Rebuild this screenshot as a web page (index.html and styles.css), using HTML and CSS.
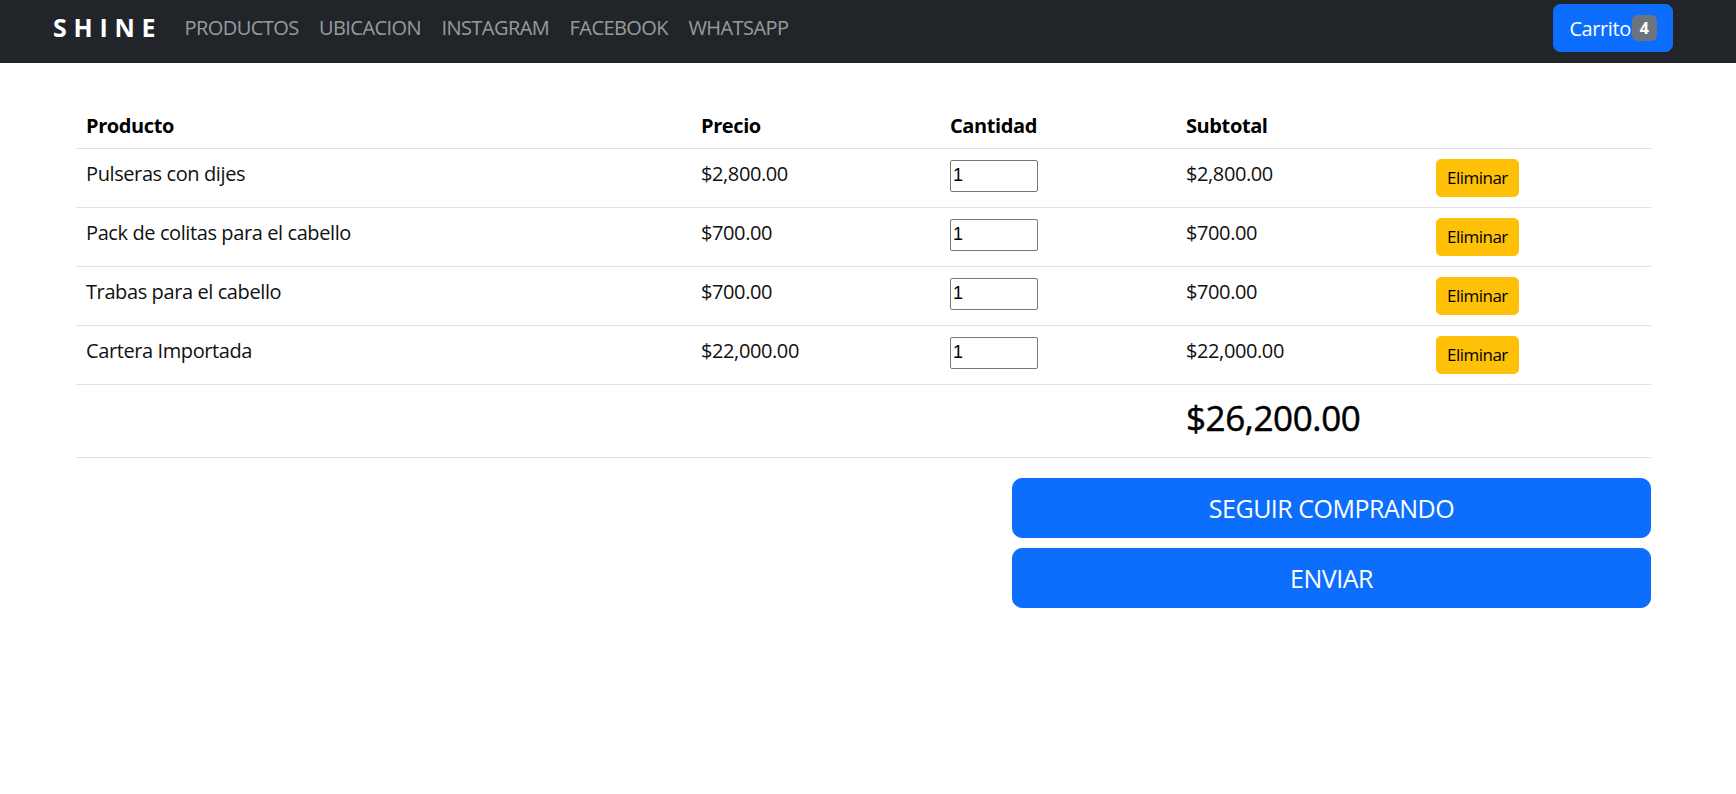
FILE: index.html
```html
<!DOCTYPE html>
<html lang="es">
<head>
<meta charset="utf-8">
<title>SHINE - Carrito</title>
<link rel="stylesheet" href="styles.css">
</head>
<body>
<nav class="navbar">
  <div class="nav-left">
    <a class="brand" href="#">SHINE</a>
    <ul class="nav-links">
      <li><a href="#">PRODUCTOS</a></li>
      <li><a href="#">UBICACION</a></li>
      <li><a href="#">INSTAGRAM</a></li>
      <li><a href="#">FACEBOOK</a></li>
      <li><a href="#">WHATSAPP</a></li>
    </ul>
  </div>
  <button class="btn-cart" type="button">Carrito<span class="badge">4</span></button>
</nav>

<main class="content">
  <table class="cart-table">
    <colgroup>
      <col class="col-prod">
      <col class="col-price">
      <col class="col-qty">
      <col class="col-sub">
      <col class="col-act">
    </colgroup>
    <thead>
      <tr>
        <th>Producto</th>
        <th>Precio</th>
        <th>Cantidad</th>
        <th>Subtotal</th>
        <th></th>
      </tr>
    </thead>
    <tbody>
      <tr>
        <td>Pulseras con dijes</td>
        <td>$2,800.00</td>
        <td><input class="qty" type="number" value="1"></td>
        <td>$2,800.00</td>
        <td><button class="btn-del" type="button">Eliminar</button></td>
      </tr>
      <tr>
        <td>Pack de colitas para el cabello</td>
        <td>$700.00</td>
        <td><input class="qty" type="number" value="1"></td>
        <td>$700.00</td>
        <td><button class="btn-del" type="button">Eliminar</button></td>
      </tr>
      <tr>
        <td>Trabas para el cabello</td>
        <td>$700.00</td>
        <td><input class="qty" type="number" value="1"></td>
        <td>$700.00</td>
        <td><button class="btn-del" type="button">Eliminar</button></td>
      </tr>
      <tr>
        <td>Cartera Importada</td>
        <td>$22,000.00</td>
        <td><input class="qty" type="number" value="1"></td>
        <td>$22,000.00</td>
        <td><button class="btn-del" type="button">Eliminar</button></td>
      </tr>
      <tr class="total-row">
        <td></td>
        <td></td>
        <td></td>
        <td><h3 class="total">$26,200.00</h3></td>
        <td></td>
      </tr>
    </tbody>
  </table>

  <div class="actions">
    <button class="btn-big" type="button">SEGUIR COMPRANDO</button>
    <button class="btn-big" type="button">ENVIAR</button>
  </div>
</main>
</body>
</html>
```

FILE: styles.css
```css
* { box-sizing: border-box; }

body {
  margin: 0;
  font-family: "Open Sans", "Noto Sans", sans-serif;
  font-size: 20px;
  line-height: 1.5;
  color: #111;
  background: #fff;
  letter-spacing: -0.02em;
}

.navbar {
  height: 63px;
  background: #212529;
  display: flex;
  align-items: center;
  justify-content: space-between;
  padding: 0 63px 7px 53px;
}

.nav-left {
  display: flex;
  align-items: center;
}

.brand {
  color: #fff;
  text-decoration: none;
  font-weight: 700;
  font-size: 25px;
  letter-spacing: 0.27em;
  margin-right: 12px;
}

.nav-links {
  list-style: none;
  margin: 0;
  padding: 0;
  display: flex;
}

.nav-links a {
  display: block;
  padding: 0 10.2px;
  color: rgba(255, 255, 255, 0.55);
  text-decoration: none;
  font-size: 20px;
  letter-spacing: -0.028em;
}

.btn-cart {
  height: 48px;
  padding: 0 15px;
  background: #0d6efd;
  border: 1px solid #0d6efd;
  border-radius: 7.5px;
  color: #fff;
  font-family: inherit;
  font-size: 20px;
  letter-spacing: -0.02em;
  display: flex;
  align-items: center;
}

.badge {
  display: inline-block;
  background: #6c757d;
  color: #fff;
  font-weight: 700;
  font-size: 16px;
  line-height: 1;
  padding: 5px 8px;
  border-radius: 6px;
  margin-left: 1px;
  letter-spacing: 0;
}

.content {
  margin: 34px 85px 0 76px;
}

.cart-table {
  width: 100%;
  table-layout: fixed;
  border-collapse: collapse;
  margin-bottom: 20px;
}

.col-prod { width: 615px; }
.col-price { width: 249px; }
.col-qty { width: 236px; }
.col-sub { width: 250px; }
.col-act { width: 225px; }

.cart-table th,
.cart-table td {
  padding: 10px;
  text-align: left;
  vertical-align: top;
  border-bottom: 1px solid #dee2e6;
}

.cart-table th {
  padding: 14px 10px 7px;
  font-weight: 700;
  color: #000;
}

.qty {
  width: 88px;
  height: 32px;
  border: 1px solid #767676;
  border-radius: 2px;
  padding: 1px 2px;
  font-family: "Liberation Sans", Arial, sans-serif;
  font-size: 18px;
  color: #000;
  letter-spacing: 0;
  -moz-appearance: textfield;
}

.qty::-webkit-inner-spin-button,
.qty::-webkit-outer-spin-button {
  -webkit-appearance: none;
  margin: 0;
}

.btn-del {
  background: #ffc107;
  border: 1px solid #ffc107;
  border-radius: 5px;
  padding: 5px 10px;
  height: 38px;
  font-family: inherit;
  font-size: 17px;
  line-height: 26px;
  color: #000;
  letter-spacing: -0.03em;
}

.total {
  margin: 2px 0 8px;
  font-size: 35px;
  font-weight: 400;
  -webkit-text-stroke: 0.5px currentColor;
  line-height: 42px;
  color: #000;
}

.actions {
  display: flex;
  flex-direction: column;
  align-items: flex-end;
  gap: 10px;
}

.btn-big {
  width: 639px;
  height: 60px;
  background: #0d6efd;
  border: 1px solid #0d6efd;
  border-radius: 10px;
  color: #fff;
  font-family: inherit;
  font-size: 25px;
  letter-spacing: -0.02em;
}
```
